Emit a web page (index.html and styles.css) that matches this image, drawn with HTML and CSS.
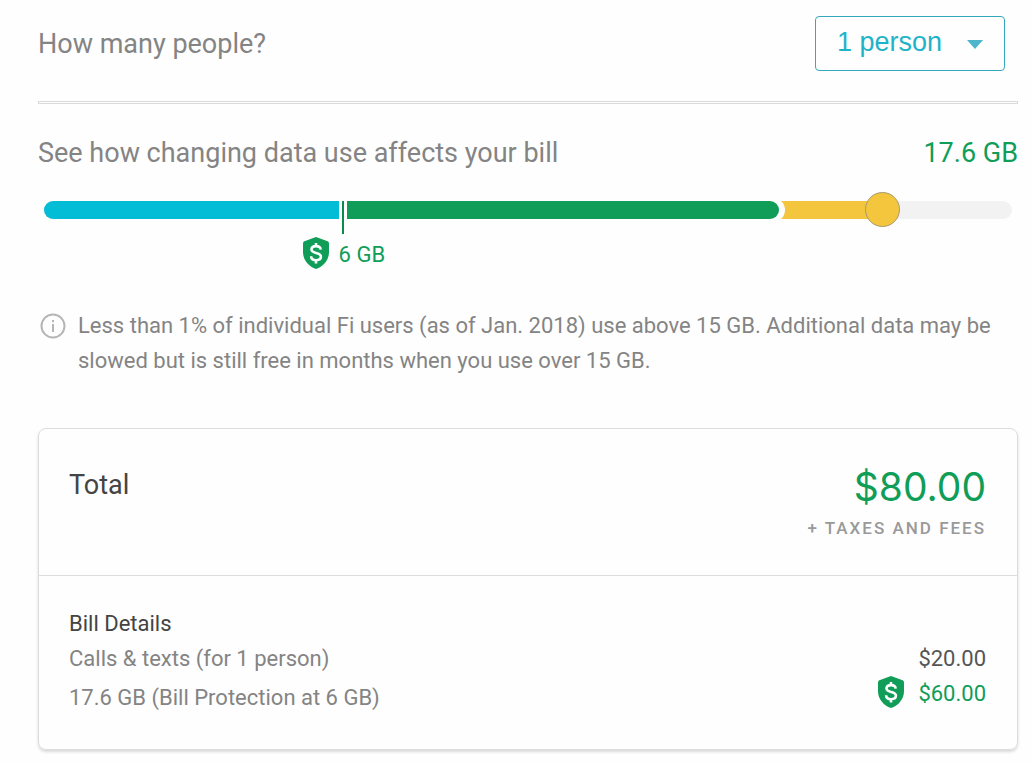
FILE: index.html
```html
<!DOCTYPE html>
<html lang="en">
<head>
  <meta charset="UTF-8">
  <meta name="viewport" content="width=device-width, initial-scale=1">
  <title>Bill Estimate</title>
  <link rel="stylesheet" href="styles.css">
</head>
<body>
  <!-- shared shield icon -->
  <svg class="sprite" width="0" height="0" aria-hidden="true">
    <symbol id="shield" viewBox="0 0 26 32">
      <path fill="#0f9d58" d="M13 0 24.600 4.300Q26 4.900 26 6.400V15C26 23 20.500 29.500 13 32 5.500 29.500 0 23 0 15V6.400Q0 4.900 1.400 4.300Z"/>
      <path fill="none" stroke="#fff" stroke-width="2.600" d="M17.700 12.600C17.500 10.400 15.700 9.100 13.100 9.100 10.400 9.100 8.500 10.500 8.500 12.600 8.500 17.300 17.900 14.600 17.900 19.600 17.900 21.900 15.900 23.200 13.200 23.200 10.200 23.200 8.200 21.700 8.100 19.200M13 6V9.500M13 23V26.600"/>
    </symbol>
  </svg>

  <main class="estimate">
    <div class="row people">
      <label for="people">How many people?</label>
      <div class="select-box">
        <select id="people">
          <option>1 person</option>
          <option>2 people</option>
          <option>3 people</option>
          <option>4 people</option>
        </select>
        <svg class="arrow" width="18" height="9" viewBox="0 0 18 9" aria-hidden="true"><path fill="#4db6cc" d="M1 0H17L9 9Z"/></svg>
      </div>
    </div>

    <hr class="divider">

    <div class="row">
      <label for="data">See how changing data use affects your bill</label>
      <output class="amount" for="data">17.6 GB</output>
    </div>

    <div class="slider">
      <div class="track">
        <div class="used">
          <div class="seg paid"></div>
          <div class="seg mark"></div>
          <div class="seg free"></div>
          <div class="seg slow"></div>
        </div>
      </div>
      <input type="range" id="data" min="0" max="20" step="0.1" value="17.6">
    </div>
    <div class="protection">
      <svg class="shield" width="26" height="32" aria-hidden="true"><use href="#shield"/></svg>
      <span>6 GB</span>
    </div>

    <div class="note">
      <svg class="info" width="26" height="26" viewBox="0 0 26 26" aria-hidden="true">
        <circle cx="13" cy="13" r="11.500" fill="none" stroke="#b5b5b5" stroke-width="2"/>
        <path fill="#b5b5b5" d="M12 7H14V9.300H12ZM12 11H14V19H12Z"/>
      </svg>
      <p>Less than 1% of individual Fi users (as of Jan. 2018) use above 15 GB. Additional data may be slowed but is still free in months when you use over 15 GB.</p>
    </div>

    <section class="card">
      <div class="total">
        <h2>Total</h2>
        <div class="price">
          <strong>$80.00</strong>
          <small>+ TAXES AND FEES</small>
        </div>
      </div>
      <div class="details">
        <div class="lines">
          <h3>Bill Details</h3>
          <p>Calls &amp; texts (for 1 person)</p>
          <p class="data-line">17.6 GB (Bill Protection at 6 GB)</p>
        </div>
        <div class="costs">
          <span>$20.00</span>
          <span class="protected"><svg class="shield" width="26" height="32" aria-hidden="true"><use href="#shield"/></svg>$60.00</span>
        </div>
      </div>
    </section>
  </main>
</body>
</html>
```

FILE: styles.css
```css
* {
  box-sizing: border-box;
}
body {
  margin: 0;
  background: #fefefe;
  color: #848484;
  font-family: Roboto, Arial, sans-serif;
  font-size: 22px;
  line-height: 35px;
}
h2, h3, p {
  margin: 0;
  font-weight: normal;
}
.sprite {
  position: absolute;
}
.estimate {
  padding: 16px 15px 12px 38px;
}
.row {
  display: flex;
  justify-content: space-between;
  align-items: center;
  font-size: 27px;
  line-height: 36px;
}
.people {
  padding-right: 13px;
}
.select-box {
  position: relative;
}
.select-box select {
  appearance: none;
  display: block;
  width: 190px;
  height: 55px;
  padding: 0 50px 4px 21px;
  border: 1px solid #35a9bb;
  border-radius: 4px;
  background: #fefefe;
  color: #1fb3c8;
  font-family: "Liberation Sans", Arial, sans-serif;
  font-size: 27px;
}
.arrow {
  position: absolute;
  right: 21px;
  top: 24px;
  pointer-events: none;
}
.divider {
  height: 3px;
  margin: 30px 0 31px;
  border: 1px solid #dadada;
}
.amount {
  color: #0f9d58;
}

/* data slider */
.slider {
  position: relative;
  margin: 30px 6px 0;
}
.track {
  height: 18px;
  border-radius: 9px;
  background: #f2f2f2;
}
.used {
  display: flex;
  width: 87%;
  height: 18px;
}
.paid {
  width: 35%;
  border-radius: 9px 0 0 9px;
  background: #03bcd6;
}
.mark {
  width: 8px;
  height: 33px;
  border: solid #fefefe;
  border-width: 0 3px;
  background: #0b8a4c;
}
.free {
  position: relative;
  flex: 1;
  border-radius: 0 9px 9px 0;
  background: #0f9d58;
  box-shadow: 3px 0 0 3px #fefefe;
}
.slow {
  width: 13%;
  margin-left: -2px;
  background: #f4c63d;
}
.slider input {
  appearance: none;
  position: absolute;
  left: 0;
  top: -10px;
  width: 100%;
  height: 36px;
  margin: 0;
  background: transparent;
}
.slider input::-webkit-slider-thumb {
  appearance: none;
  width: 35px;
  height: 35px;
  border: 1px solid #a89a72;
  border-radius: 50%;
  background: #f4c63d;
}
.protection {
  display: flex;
  gap: 10px;
  margin-top: 18px;
  padding-left: 27%;
  color: #0f9d58;
}
.shield {
  flex: none;
}

.note {
  display: flex;
  gap: 12px;
  margin-top: 36px;
  padding-left: 2px;
}
.info {
  flex: none;
  margin-top: 5px;
}

/* bill card */
.card {
  margin-top: 50px;
  border: 1px solid #dcdcdc;
  border-radius: 8px;
  box-shadow: 0 2px 3px rgba(0, 0, 0, 0.15);
}
.total {
  display: flex;
  justify-content: space-between;
  padding: 36px 31px 28px 30px;
  border-bottom: 1px solid #dcdcdc;
}
.total h2 {
  color: #444;
  font-size: 27px;
  line-height: 40px;
}
.price {
  display: flex;
  flex-direction: column;
  text-align: right;
}
.price strong {
  color: #0f9d58;
  font-family: Inter, sans-serif;
  font-size: 39px;
  font-weight: normal;
  line-height: 44px;
}
.price small {
  color: #999;
  font-size: 17px;
  font-weight: 500;
  letter-spacing: 2px;
  line-height: 38px;
}
.details {
  display: flex;
  justify-content: space-between;
  align-items: flex-end;
  padding: 30px 31px 34px 30px;
}
.details h3 {
  color: #444;
  font-size: 22px;
}
.data-line {
  margin-top: 4px;
}
.costs {
  display: flex;
  flex-direction: column;
  align-items: flex-end;
  padding-bottom: 4px;
  color: #555;
}
.protected {
  display: flex;
  gap: 14px;
  color: #0f9d58;
}
```
